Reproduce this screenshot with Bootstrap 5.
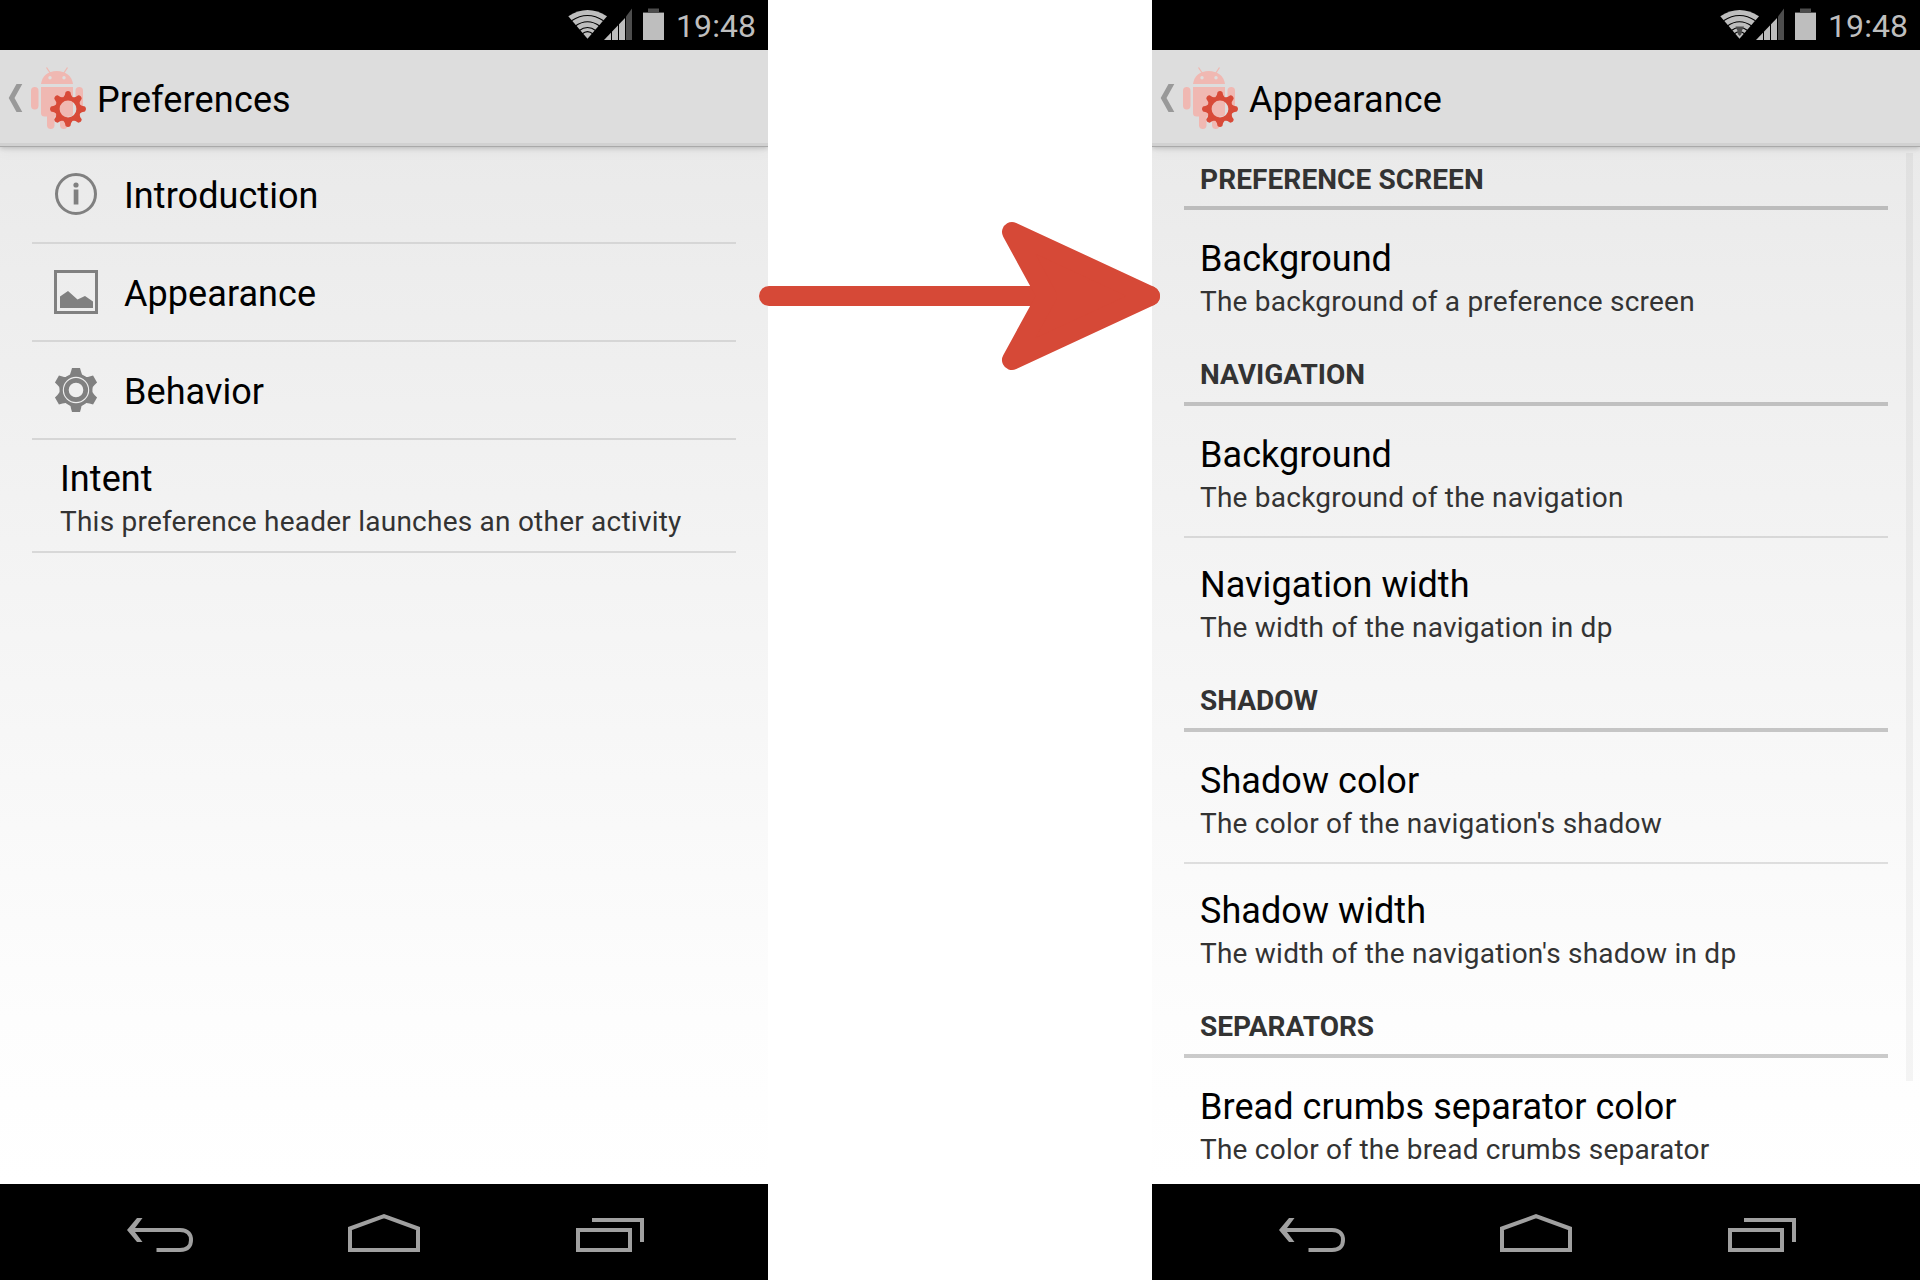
<!DOCTYPE html>
<html lang="en">
<head>
<meta charset="utf-8">
<meta name="viewport" content="width=device-width, initial-scale=1">
<title>Preferences</title>
<link href="https://cdn.jsdelivr.net/npm/bootstrap@5.3.0/dist/css/bootstrap.min.css" rel="stylesheet">
<style>
  body { width: 1920px; height: 1280px; overflow: hidden; background: #fff; font-family: Roboto, "Liberation Sans", sans-serif; color: #000; }
  svg { display: block; flex: none; }
  .phone { width: 768px; height: 1280px; }
  .statusbar { height: 50px; background: #000; color: #bebebe; padding-right: 12px; }
  .signals { margin-right: 12px; }
  .clock { font-size: 32px; line-height: 52px; width: 80px; letter-spacing: .1px; }
  .actionbar { height: 97px; background: linear-gradient(#ddd 93px, #d1d1d1 93px, #d1d1d1 96px, #a9a9a9 96px); padding-left: 8px; z-index: 1; box-shadow: 0 1px 5px rgba(0,0,0,.2), 0 4px 14px rgba(0,0,0,.04); }
  .actionbar .t1 { padding: 29px 0 0 9px; letter-spacing: .15px; }
  .t1 { font-size: 36px; line-height: 42px; white-space: nowrap; letter-spacing: .06px; }
  .t2 { font-size: 28px; line-height: 34px; color: #333; white-space: nowrap; letter-spacing: .23px; padding-top: 5px; }
  .screen { height: 1037px; overflow: hidden; background: linear-gradient(#eaeaea, #ededed 12%, #f3f3f3 38%, #fdfdfd 84%, #fff); padding: 0 32px; }
  .entry { height: 98px; border-bottom: 2px solid #d6d6d6; padding-left: 22px; }
  .entry:first-child { height: 97px; padding-bottom: 1px; }
  .entry .t1 { padding-top: 3px; margin-left: 26px; }
  .intent { height: 113px; border-bottom: 2px solid #d8d8d8; padding: 18px 0 0 28px; }
  .group-head { height: 68px; border-bottom: 4px solid rgba(0,0,0,.2); padding: 20px 0 0 16px; font-size: 28px; line-height: 34px; font-weight: 700; color: #333; }
  .group-head.top { height: 63px; padding-top: 16px; letter-spacing: .1px; }
  .pref { height: 128px; padding: 28px 0 0 16px; }
  .pref + .pref { margin-top: 2px; padding-top: 26px; border-top: 2px solid rgba(0,0,0,.11); }
  .navkeys { height: 96px; background: #000; }
  .arrow { left: 756px; top: 216px; z-index: 5; }
  .thumb { width: 7px; height: 928px; right: 7px; top: 153px; background: rgba(0,0,0,.04); z-index: 2; }
</style>
<script src="https://cdn.jsdelivr.net/npm/bootstrap@5.3.0/dist/js/bootstrap.bundle.min.js"></script>
</head>
<body class="position-relative d-flex justify-content-between">

<svg width="0" height="0" class="position-absolute">
  <defs>
    <symbol id="signals" viewBox="0 0 104 50">
      <path d="M27.500 38.700L8.300 16.300Q27.500 3.600 47 16.300z" fill="#bebebe"/>
      <g fill="none" stroke="#000" stroke-width="1.100">
        <path d="M11.500 20.800Q27.500 10.200 43.500 20.800M15 26.200Q27.500 17.300 40 26.200M19 30.700Q27.500 24.300 36 30.700M22 34Q27.500 29.200 33 34"/>
      </g>
      <path d="M44 40L66 17V40z" fill="#bebebe"/>
      <path d="M66 16.500L72 8.500V40H66z" fill="#4d4d4d"/>
      <path d="M51.500 25V41M58.500 20V41M65.500 10V41" stroke="#000"/>
      <path d="M83 13H104V40H83z" fill="#bebebe"/>
      <path d="M83 13V12H88V8.500H99V12H104V13z" fill="#4d4d4d"/>
    </symbol>
    <symbol id="droid" viewBox="0 0 80 96">
      <path d="M8.500 34H14.300L6.500 48 14.300 62H8.500L.7 48z" fill="#999"/>
      <g fill="#f0b8b2">
        <path d="M33 34C34 26 40 21 48.700 21S64 26 65 34z"/>
        <path d="M38.500 17.500L42.500 23.500M59.500 17.500L55.500 23.500" stroke="#f0b8b2" stroke-width="1.300"/>
        <path d="M33 37H65V63Q65 66.500 61.500 66.500H36.500Q33 66.500 33 63z"/>
        <rect x="23" y="37" width="7.500" height="22.500" rx="3.700"/>
        <rect x="67.500" y="37" width="7.500" height="22.500" rx="3.700"/>
        <rect x="39" y="60" width="7.500" height="19" rx="3.700"/>
        <rect x="52" y="60" width="7.500" height="19" rx="3.700"/>
      </g>
      <circle cx="42" cy="27.700" r="1.700" fill="#ddd"/><circle cx="56" cy="27.700" r="1.700" fill="#ddd"/>
      <g transform="translate(60 59)" fill="#d84a38">
        <circle r="10.600" fill="none" stroke="#d84a38" stroke-width="4.400"/>
        <path id="tooth" d="M-4.800 -11.500Q-2.800 -13.500 -2.400 -17Q0 -19 2.400 -17Q2.800 -13.500 4.800 -11.500z"/>
        <use href="#tooth" transform="rotate(45)"/><use href="#tooth" transform="rotate(90)"/>
        <use href="#tooth" transform="rotate(135)"/><use href="#tooth" transform="rotate(180)"/>
        <use href="#tooth" transform="rotate(225)"/><use href="#tooth" transform="rotate(270)"/>
        <use href="#tooth" transform="rotate(315)"/>
      </g>
    </symbol>
    <symbol id="keys" viewBox="0 0 768 96">
      <g fill="none" stroke="#a0a0a0" stroke-width="4">
        <path d="M156.500 66H180C188.500 66 191 61 191 56S188.500 46 180 46H131"/>
        <path d="M350 44.500V66H418V44.500L384 32.200z"/>
        <path d="M578 46H630V66H578zM592 36H642V58"/>
      </g>
      <path d="M137 34H142.500L133.500 46 142.500 58H137L127 46z" fill="#a0a0a0"/>
    </symbol>
  </defs>
</svg>

<section class="phone d-flex flex-column position-relative overflow-hidden">
  <div class="statusbar d-flex justify-content-end">
    <svg width="104" height="50" class="signals"><use href="#signals"/></svg>
    <div class="clock">19:48</div>
  </div>
  <header class="actionbar d-flex align-items-start position-relative">
    <svg width="80" height="96"><use href="#droid"/></svg>
    <div class="t1">Preferences</div>
  </header>
  <main class="screen">
    <div class="entry d-flex align-items-center">
      <svg width="44" height="44"><circle cx="22" cy="22" r="19.500" fill="none" stroke="#808080" stroke-width="3"/><circle cx="22" cy="13" r="2.600" fill="#808080"/><path d="M19.700 17.500h4.700v15h-4.700z" fill="#808080"/></svg>
      <div class="t1">Introduction</div>
    </div>
    <div class="entry d-flex align-items-center">
      <svg width="44" height="44"><path d="M1.500 1.500h41v41h-41z" fill="none" stroke="#808080" stroke-width="3"/><path d="M6 38V26.500L14 21l9.500 8.500L31 26l8 5.500V38z" fill="#808080"/></svg>
      <div class="t1">Appearance</div>
    </div>
    <div class="entry d-flex align-items-center">
      <svg width="44" height="44"><g transform="translate(22 22)">
        <circle r="14" fill="none" stroke="#808080" stroke-width="5"/>
        <g fill="#808080"><path id="cog" d="M-8 -13.500Q-5.500 -15 -5 -18.500L-4 -22H4L5 -18.500Q5.500 -15 8 -13.500z"/>
        <use href="#cog" transform="rotate(60)"/><use href="#cog" transform="rotate(120)"/><use href="#cog" transform="rotate(180)"/><use href="#cog" transform="rotate(240)"/><use href="#cog" transform="rotate(300)"/></g>
        <circle r="13.200" fill="#efefef"/><circle r="9.700" fill="none" stroke="#808080" stroke-width="4.800"/></g></svg>
      <div class="t1">Behavior</div>
    </div>
    <div class="intent">
      <div class="t1">Intent</div>
      <div class="t2">This preference header launches an other activity</div>
    </div>
  </main>
  <nav class="navkeys"><svg width="768" height="96"><use href="#keys"/></svg></nav>
</section>

<svg class="arrow position-absolute" width="408" height="160">
  <path d="M13 80H394" stroke="#d64937" stroke-width="20" stroke-linecap="round"/>
  <path d="M256 16L394 80 256 144 291 80z" fill="#d64937" stroke="#d64937" stroke-width="20" stroke-linejoin="round"/>
</svg>

<section class="phone d-flex flex-column position-relative overflow-hidden">
  <div class="statusbar d-flex justify-content-end">
    <svg width="104" height="50" class="signals"><use href="#signals"/><path d="M23.500 26.500H32L29.500 31.500V34L27.700 36 25.800 34V31.500z" fill="#4d4d4d"/></svg>
    <div class="clock">19:48</div>
  </div>
  <header class="actionbar d-flex align-items-start position-relative">
    <svg width="80" height="96"><use href="#droid"/></svg>
    <div class="t1">Appearance</div>
  </header>
  <div class="thumb position-absolute"></div>
  <main class="screen">
    <div class="group-head top">PREFERENCE SCREEN</div>
    <div class="pref"><div class="t1">Background</div><div class="t2">The background of a preference screen</div></div>
    <div class="group-head">NAVIGATION</div>
    <div class="pref"><div class="t1">Background</div><div class="t2">The background of the navigation</div></div>
    <div class="pref"><div class="t1">Navigation width</div><div class="t2">The width of the navigation in dp</div></div>
    <div class="group-head">SHADOW</div>
    <div class="pref"><div class="t1">Shadow color</div><div class="t2">The color of the navigation's shadow</div></div>
    <div class="pref"><div class="t1">Shadow width</div><div class="t2">The width of the navigation's shadow in dp</div></div>
    <div class="group-head">SEPARATORS</div>
    <div class="pref"><div class="t1">Bread crumbs separator color</div><div class="t2">The color of the bread crumbs separator</div></div>
  </main>
  <nav class="navkeys"><svg width="768" height="96"><use href="#keys"/></svg></nav>
</section>
</body>
</html>
